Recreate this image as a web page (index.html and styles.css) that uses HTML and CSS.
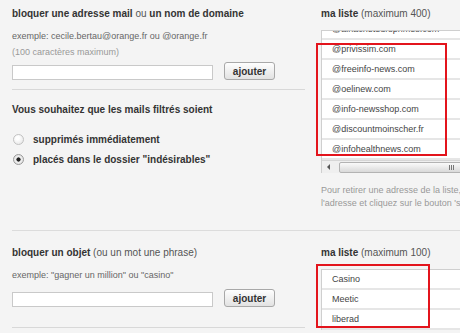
FILE: index.html
```html
<!DOCTYPE html>
<html>
<head>
    <meta charset="utf-8">
    <title>Filtres anti-spam</title>
    <link rel="stylesheet" href="styles.css">
</head>
<body>
<div id="page">
    <div class="section first">
        <div class="left">
            <h2 class="title">bloquer une adresse mail <span class="light">ou</span> un nom de domaine</h2>
            <p class="hint">exemple: cecile.bertau@orange.fr ou @orange.fr</p>
            <p class="hint muted">(100 caractères maximum)</p>
            <div class="add-row">
                <input type="text" class="field">
                <button class="btn">ajouter</button>
            </div>
            <div class="sep"></div>
            <h2 class="title question">Vous souhaitez que les mails filtrés soient</h2>
            <div class="radio-row first-radio"><span class="radio"></span>supprimés immédiatement</div>
            <div class="radio-row"><span class="radio checked"></span>placés dans le dossier "indésirables"</div>
        </div>
        <div class="right">
            <h2 class="title">ma liste <span class="light">(maximum 400)</span></h2>
            <div class="list-wrap">
                <div class="list big">
                    <div class="items scrolled">
                        <div class="item">@ainacheteursprimes.com</div>
                        <div class="item">@privissim.com</div>
                        <div class="item">@freeinfo-news.com</div>
                        <div class="item">@oelinew.com</div>
                        <div class="item">@info-newsshop.com</div>
                        <div class="item">@discountmoinscher.fr</div>
                        <div class="item">@infohealthnews.com</div>
                    </div>
                    <div class="hscroll">
                        <span class="arrow"></span>
                        <span class="thumb"><span class="grip"></span></span>
                    </div>
                </div>
                <div class="marker marker-big"></div>
            </div>
            <p class="note">Pour retirer une adresse de la liste, sélectionnez<br>l'adresse et cliquez sur le bouton 'supprimer'</p>
        </div>
    </div>

    <div class="section second">
        <div class="left">
            <h2 class="title">bloquer un objet <span class="light">(ou un mot une phrase)</span></h2>
            <p class="hint">exemple: "gagner un million" ou "casino"</p>
            <div class="add-row">
                <input type="text" class="field">
                <button class="btn">ajouter</button>
            </div>
            <div class="sep bottom-sep"></div>
        </div>
        <div class="right">
            <h2 class="title">ma liste <span class="light">(maximum 100)</span></h2>
            <div class="list-wrap">
                <div class="list">
                    <div class="items">
                        <div class="item">Casino</div>
                        <div class="item">Meetic</div>
                        <div class="item">liberad</div>
                    </div>
                </div>
                <div class="marker marker-small"></div>
            </div>
        </div>
    </div>
</div>
</body>
</html>
```

FILE: styles.css
```css
body {
    margin: 0;
    overflow: hidden;
    background-color: #f4f4f4;
    font-family: "Liberation Sans", Arial, sans-serif;
    color: #333;
}
#page {
    padding-left: 12px;
    width: 600px;
}
.section {
    display: flex;
}
.first {
    height: 230px;
}
.second {
    border-top: 1px solid #dcdcdc;
}
.left {
    width: 293px;
    flex-shrink: 0;
}
.right {
    width: 260px;
    margin-left: 16px;
}
.title {
    margin: 0;
    padding-top: 7px;
    font-size: 10px;
    line-height: 14px;
    font-weight: bold;
    color: #333;
}
.second .title {
    padding-top: 15px;
}
.light {
    font-weight: normal;
    color: #555;
}
.hint {
    margin: 9px 0 0;
    font-size: 9px;
    line-height: 13px;
    color: #666;
}
.hint.muted {
    margin-top: 3px;
    color: #999;
}
.add-row {
    display: flex;
    align-items: flex-end;
    margin-top: 3px;
}
.second .add-row {
    margin-top: 7px;
}
.field {
    box-sizing: border-box;
    width: 201px;
    height: 15px;
    margin: 0;
    border: 1px solid #c9c9c9;
    background: #fff;
}
.btn {
    box-sizing: border-box;
    width: 51px;
    height: 18px;
    margin: 0 0 0 11px;
    padding: 0;
    border: 1px solid #a8a8a8;
    border-radius: 3px;
    background: linear-gradient(#fefefe, #e2e2e2);
    font-family: "Liberation Sans", Arial, sans-serif;
    font-size: 10px;
    font-weight: bold;
    color: #333;
}
.sep {
    margin-top: 9px;
    height: 1px;
    background: #d8d8d8;
}
.bottom-sep {
    margin-top: 20px;
}
.question {
    padding-top: 13px;
}
.radio-row {
    display: flex;
    align-items: center;
    height: 14px;
    margin-top: 6px;
    font-size: 10px;
    font-weight: bold;
    color: #333;
}
.first-radio {
    margin-top: 15px;
}
.radio {
    box-sizing: border-box;
    width: 11px;
    height: 11px;
    margin: 1px 9px 0 1px;
    border: 1px solid #c2c2c2;
    border-radius: 50%;
    background: radial-gradient(circle at 40% 35%, #fff 20%, #e4e4e4 90%);
}
.radio.checked {
    border-color: #9a9a9a;
    background: radial-gradient(circle, #222 0, #222 1.8px, #f0f0f0 2.4px, #dadada 100%);
}
.list-wrap {
    position: relative;
    margin-top: 9px;
}
.list {
    border-top: 1px solid #cfcfcf;
    border-left: 1px solid #cfcfcf;
    background: #fff;
    overflow: hidden;
}
.big {
    height: 142px;
    display: flex;
    flex-direction: column;
}
.items {
    flex: 1;
    overflow: hidden;
}
.scrolled .item:first-child {
    margin-top: -11px;
}
.item {
    box-sizing: border-box;
    height: 20px;
    padding-left: 10px;
    border-bottom: 2px solid #e6e6e6;
    font-size: 9px;
    line-height: 19px;
    color: #444;
    white-space: nowrap;
}
.hscroll {
    display: flex;
    align-items: center;
    height: 12px;
    border-top: 1px solid #d6d6d6;
    background: #efefef;
}
.arrow {
    width: 0;
    height: 0;
    margin: 0 9px 0 5px;
    border-top: 3px solid transparent;
    border-bottom: 3px solid transparent;
    border-right: 3px solid #555;
}
.thumb {
    box-sizing: border-box;
    width: 300px;
    height: 11px;
    border: 1px solid #b3b3b3;
    border-radius: 2px;
    background: linear-gradient(#fafafa, #d9d9d9);
    position: relative;
}
.grip {
    position: absolute;
    left: 109px;
    top: 2px;
    width: 5px;
    height: 5px;
    background: repeating-linear-gradient(90deg, #777 0, #777 1px, transparent 1px, transparent 2px);
}
.marker {
    position: absolute;
    border: 2px solid #e3141c;
    left: -5px;
}
.marker-big {
    top: 13px;
    width: 127px;
    height: 109px;
}
.marker-small {
    top: -5px;
    width: 110px;
    height: 60px;
}
.note {
    margin: 11px 0 0;
    font-size: 9px;
    line-height: 13px;
    color: #999;
    white-space: nowrap;
}
```
